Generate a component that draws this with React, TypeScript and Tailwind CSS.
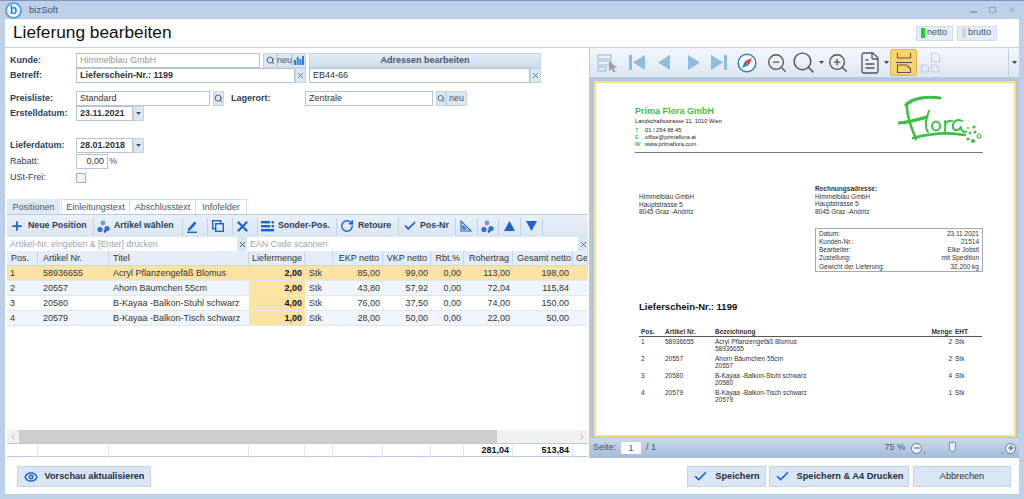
import { Check, ChevronLeft, ChevronRight, Eye, FileText, Minus, Plus, RotateCw, Search, X, ZoomIn, ZoomOut } from "lucide-react";

const positions = [
  { pos: "1", nr: "58936655", title: "Acryl Pflanzengefäß Blomus", qty: "2,00", ekp: "85,00", vkp: "99,00", rbt: "0,00", roh: "113,00", total: "198,00", bg: "bg-[#fce3a3]" },
  { pos: "2", nr: "20557", title: "Ahorn Bäumchen 55cm", qty: "2,00", ekp: "43,80", vkp: "57,92", rbt: "0,00", roh: "72,04", total: "115,84", bg: "bg-[#f0f5fb]" },
  { pos: "3", nr: "20580", title: "B-Kayaa -Balkon-Stuhl schwarz", qty: "4,00", ekp: "76,00", vkp: "37,50", rbt: "0,00", roh: "74,00", total: "150,00", bg: "bg-white" },
  { pos: "4", nr: "20579", title: "B-Kayaa -Balkon-Tisch schwarz", qty: "1,00", ekp: "28,00", vkp: "50,00", rbt: "0,00", roh: "22,00", total: "50,00", bg: "bg-[#f0f5fb]" },
];

const docRows = [
  { pos: "1", nr: "58936655", title: "Acryl Pflanzengefäß Blomus", menge: "2" },
  { pos: "2", nr: "20557", title: "Ahorn Bäumchen 55cm", menge: "2" },
  { pos: "3", nr: "20580", title: "B-Kayaa -Balkon-Stuhl schwarz", menge: "4" },
  { pos: "4", nr: "20579", title: "B-Kayaa -Balkon-Tisch schwarz", menge: "1" },
];

const cols = "grid grid-cols-[31px_71px_140px_56px_28px_50px_48px_33px_49px_60px_15px]";

function Label({ children, bold = true, className = "" }: { children: string; bold?: boolean; className?: string }) {
  return <span className={`w-[66px] shrink-0 text-[9px] leading-[15px] text-[#2c3e57] ${bold ? "font-bold" : ""} ${className}`}>{children}</span>;
}

function Field({ children, className = "" }: { children?: React.ReactNode; className?: string }) {
  return <div className={`h-[15px] border border-[#b4c4d6] bg-white px-[3px] text-[9px] leading-[13px] text-[#333] whitespace-nowrap overflow-hidden ${className}`}>{children}</div>;
}

function SideBtn({ children, className = "" }: { children?: React.ReactNode; className?: string }) {
  return <div className={`h-[15px] flex items-center justify-center border border-[#c5d4e5] bg-[#dbe6f3] text-[9px] text-[#44556b] ${className}`}>{children}</div>;
}

function DateField({ value }: { value: string }) {
  return (
    <div className="flex">
      <Field className="w-[57px] font-bold text-[#111]">{value}</Field>
      <SideBtn className="w-[11px]">
        <svg width="5" height="3" viewBox="0 0 5 3"><path d="M0 0h5L2.5 3z" fill="#44556b" /></svg>
      </SideBtn>
    </div>
  );
}

function Sep() {
  return <span className="w-px h-[17px] bg-[#c3d3e6] shrink-0" />;
}

function ArticleIcon() {
  return (
    <svg width="13" height="13" viewBox="0 0 13 13" fill="#2f6fd6" className="shrink-0">
      <circle cx="6" cy="3" r="2.4" fill="#7d97bb" />
      <circle cx="3" cy="9.5" r="2.6" />
      <circle cx="10" cy="8.5" r="2.6" />
      <circle cx="8" cy="11.5" r="1.2" fill="#1b4fa8" />
    </svg>
  );
}

function TableToolbar() {
  return (
    <div className="h-[22px] flex items-center bg-gradient-to-b from-[#e9f0f9] to-[#d9e5f3] text-[8.8px] font-bold text-[#2c3e57] whitespace-nowrap">
      <Plus size={14} strokeWidth={3} className="ml-[3px] text-[#1d63cc] shrink-0" />
      <span className="ml-[4px] w-[65px]">Neue Position</span>
      <Sep />
      <span className="ml-[3px]"><ArticleIcon /></span>
      <span className="ml-[4px] w-[68px]">Artikel wählen</span>
      <Sep />
      <svg width="11" height="13" viewBox="0 0 11 13" className="ml-[4px] mr-[9px] shrink-0">
        <path d="M1 9l6.5-7.5 2 1.7L3 10.5 .8 11z" fill="#1d63cc" />
        <rect x="0" y="11.6" width="10" height="1.4" fill="#1d63cc" />
      </svg>
      <Sep />
      <svg width="12" height="12" viewBox="0 0 12 12" className="ml-[4px] mr-[8px] shrink-0" fill="none" stroke="#1d63cc" strokeWidth="1.4">
        <rect x=".7" y=".7" width="8" height="8" />
        <rect x="3.7" y="3.7" width="7.6" height="7.6" fill="#e3ecf7" />
      </svg>
      <Sep />
      <svg width="11" height="11" viewBox="0 0 11 11" className="ml-[4px] mr-[9px] shrink-0" stroke="#1d63cc" strokeWidth="2.2"><path d="M.8.8l9.4 9.4M10.2.8L.8 10.2" /></svg>
      <Sep />
      <svg width="13" height="11" viewBox="0 0 13 11" className="ml-[3px] shrink-0" fill="#1d63cc">
        <rect x="0" y="0" width="9" height="2.4" />
        <rect x="0" y="4" width="9" height="2.4" />
        <rect x="0" y="8" width="13" height="2.4" />
        <rect x="10.5" y="0" width="2.4" height="2.4" />
        <rect x="10.5" y="4" width="2.4" height="2.4" />
      </svg>
      <span className="ml-[4px] w-[58px]">Sonder-Pos.</span>
      <Sep />
      <RotateCw size={14} strokeWidth={2.5} className="ml-[3px] text-[#1d63cc] shrink-0" />
      <span className="ml-[4px] w-[40px]">Retoure</span>
      <Sep />
      <Check size={14} strokeWidth={3} className="ml-[4px] text-[#1d63cc] shrink-0" />
      <span className="ml-[3px] w-[35px]">Pos-Nr</span>
      <Sep />
      <svg width="12" height="12" viewBox="0 0 12 12" className="ml-[4px] mr-[5px] shrink-0" fill="none" stroke="#1d63cc" strokeWidth="1.1">
        <path d="M1 1v10h10z" />
        <path d="M3 6v3h3z" />
      </svg>
      <Sep />
      <span className="ml-[3px] mr-[4px]"><ArticleIcon /></span>
      <Sep />
      <svg width="11" height="10" viewBox="0 0 11 10" className="mx-[5px] shrink-0"><path d="M5.5 0L11 10H0z" fill="#1d63cc" /></svg>
      <Sep />
      <svg width="11" height="10" viewBox="0 0 11 10" className="mx-[5px] shrink-0"><path d="M0 0h11L5.5 10z" fill="#1d63cc" /></svg>
      <Sep />
    </div>
  );
}

function PositionsTable() {
  const headers = ["Pos.", "Artikel Nr.", "Titel", "Liefermenge", "", "EKP netto", "VKP netto", "Rbt.%", "Rohertrag", "Gesamt netto", "Ge"];
  const headerPad = ["px-[4px]", "px-[5px]", "px-[4px]", "px-[3px]", "px-[3px]", "px-[3px]", "px-[3px]", "px-[3px]", "px-[3px]", "px-[4px]", "px-[3px]"];
  return (
    <div className="flex-1 flex flex-col min-h-0 border-t border-[#b9cbe0] text-[9px] text-[#333]">
      <TableToolbar />
      <div className="flex h-[14px] bg-white">
        <div className="w-[230px] px-[3px] text-[8.8px] leading-[14px] text-[#9aa5b1] whitespace-nowrap">Artikel-Nr. eingeben &amp; [Enter] drücken</div>
        <div className="w-[10px] flex items-center justify-center bg-[#dbe6f3]"><X size={9} strokeWidth={2.5} className="text-[#44556b]" /></div>
        <div className="w-[329px] ml-[2px] px-[1px] text-[8.8px] leading-[14px] text-[#9aa5b1]">EAN Code scannen</div>
        <div className="w-[10px] flex items-center justify-center bg-[#dbe6f3]"><X size={9} strokeWidth={2} className="text-[#44556b]" /></div>
      </div>
      <div className={`${cols} h-[15px] leading-[15px] bg-[#e3ecf7] border-b border-[#c9d8e8]`}>
        {headers.map((h, i) => (
          <div key={i} className={`${headerPad[i]} border-r border-[#c9d8e8] whitespace-nowrap overflow-hidden ${i >= 5 && i < 10 ? "text-right" : ""}`}>{h}</div>
        ))}
      </div>
      {positions.map((p) => (
        <div key={p.pos} className={`${cols} h-[15px] leading-[14px] border-b border-[#dfe7f0] ${p.bg}`}>
          <div className="px-[3px]">{p.pos}</div>
          <div className="px-[5px]">{p.nr}</div>
          <div className="px-[4px] whitespace-nowrap">{p.title}</div>
          <div className="px-[3px] text-right font-bold text-[#111] bg-[#fce3a3]">{p.qty}</div>
          <div className="px-[4px]">Stk</div>
          <div className="px-[3px] text-right">{p.ekp}</div>
          <div className="px-[3px] text-right">{p.vkp}</div>
          <div className="px-[3px] text-right">{p.rbt}</div>
          <div className="px-[3px] text-right">{p.roh}</div>
          <div className="px-[4px] text-right">{p.total}</div>
          <div />
        </div>
      ))}
      <div className="flex-1" />
      <div className="h-[13px] flex items-center bg-[#f0f0f0]">
        <div className="w-[12px] flex justify-center"><ChevronLeft size={8} className="text-[#999]" /></div>
        <div className="w-[478px] h-full bg-[#cdcdcd]" />
        <div className="flex-1" />
        <div className="w-[12px] flex justify-center"><ChevronRight size={8} className="text-[#999]" /></div>
      </div>
      <div className={`${cols} h-[14px] leading-[13px] border-y border-[#b9cbe0] bg-white`}>
        {headers.map((_, i) => (
          <div key={i} className={`px-[3px] text-right font-bold text-[#111] ${i < 10 ? "border-r border-[#e1e8f0]" : ""}`}>
            {i === 8 ? "281,04" : i === 9 ? "513,84" : ""}
          </div>
        ))}
      </div>
    </div>
  );
}

function PreviewToolbar() {
  const light = "#8fbcdc";
  return (
    <div className="h-[30px] shrink-0 flex items-center bg-gradient-to-b from-[#f3f7fc] to-[#dbe6f2] border-b border-[#b9cbe0]">
      <svg width="21" height="18" viewBox="0 0 21 18" className="ml-[7px] shrink-0" fill="none" stroke="#a9bed4" strokeWidth="1.2">
        <rect x="1" y="1" width="13" height="4" />
        <rect x="1" y="7" width="13" height="4" />
        <rect x="1" y="13" width="8" height="4" />
        <path d="M12 7l0 10 2.5-2 2 3.5 2-1-2-3.5 3.5-.5z" fill="#9a9ea6" stroke="none" />
      </svg>
      <svg width="16" height="15" viewBox="0 0 16 15" className="ml-[11px] shrink-0" fill={light}><rect width="3" height="15" /><path d="M16 0v15L4 7.5z" /></svg>
      <svg width="12" height="15" viewBox="0 0 12 15" className="ml-[13px] shrink-0" fill={light}><path d="M12 0v15L0 7.5z" /></svg>
      <svg width="12" height="15" viewBox="0 0 12 15" className="ml-[18px] shrink-0" fill={light}><path d="M0 0v15L12 7.5z" /></svg>
      <svg width="16" height="15" viewBox="0 0 16 15" className="ml-[11px] shrink-0" fill={light}><path d="M0 0v15L12 7.5z" /><rect x="13" width="3" height="15" /></svg>
      <svg width="20" height="20" viewBox="0 0 20 20" className="ml-[10px] shrink-0">
        <circle cx="10" cy="10" r="8.8" fill="white" stroke="#2f86c6" strokeWidth="1.6" />
        <path d="M15 5l-7 3 4 4z" fill="#e0413a" />
        <path d="M5 15l3-7 4 4z" fill="#2f86c6" />
      </svg>
      <ZoomOut size={22} strokeWidth={1.5} className="ml-[9px] text-[#555] shrink-0" />
      <Search size={25} strokeWidth={1.4} className="ml-[3px] text-[#555] shrink-0" />
      <svg width="5" height="3" viewBox="0 0 5 3" className="ml-[3px] shrink-0"><path d="M0 0h5L2.5 3z" fill="#444" /></svg>
      <ZoomIn size={22} strokeWidth={1.5} className="ml-[3px] text-[#555] shrink-0" />
      <FileText size={24} strokeWidth={1.3} className="ml-[9px] text-[#555] shrink-0" />
      <svg width="5" height="3" viewBox="0 0 5 3" className="ml-[2px] shrink-0"><path d="M0 0h5L2.5 3z" fill="#444" /></svg>
      <div className="ml-[1px] w-[27px] h-[27px] shrink-0 flex items-center justify-center rounded-[2px] border border-[#d9b64e] bg-[#fbd36c]">
        <svg width="16" height="20" viewBox="0 0 16 20" fill="none" stroke="#555" strokeWidth="1.1">
          <path d="M1.5 0v5h13V0" />
          <path d="M0 9.5h16" />
          <path d="M1.5 19.5V12h9l4 3.5v4z" />
        </svg>
      </div>
      <svg width="19" height="21" viewBox="0 0 19 21" className="ml-[4px] shrink-0" fill="none" stroke="#c4ccd6" strokeWidth="1">
        <path d="M10.5 1h5l3 3v6h-8z" />
        <path d="M.5 13h5l2 2v5H.5z" />
        <path d="M10.5 13h5l2 2v5h-7z" />
      </svg>
      <div className="ml-auto h-[28px] w-[11px] border-l border-[#c6d3e2] flex items-center justify-center">
        <svg width="5" height="3" viewBox="0 0 5 3"><path d="M0 0h5L2.5 3z" fill="#444" /></svg>
      </div>
    </div>
  );
}

function FloraLogo() {
  return (
    <svg width="85" height="52" viewBox="0 0 85 52" fill="none" stroke="#3dbf45" strokeLinecap="round" strokeLinejoin="round">
      <path d="M8 10C14 3 30 1 42 3" strokeWidth="3.2" />
      <path d="M9 8C8 18 12 30 18 44" strokeWidth="2.6" />
      <path d="M1 28C12 27 22 24 29 22" strokeWidth="3.2" />
      <path d="M31 16C27 24 27 33 30 37" strokeWidth="2" />
      <ellipse cx="38" cy="31" rx="4" ry="4.5" strokeWidth="2" />
      <path d="M47 26c1 4 0 7 0 10M47 29c2-3 4-4 7-3" strokeWidth="2" />
      <path d="M64 26c-5-3-10 1-9 7 1 3 6 3 8-1 0 3 1 5 5 5" strokeWidth="2" />
      <path d="M15 43C30 39 50 37 67 40" strokeWidth="2.6" />
      <g fill="#3dbf45" stroke="none">
        <circle cx="70" cy="33" r="1" />
        <circle cx="76" cy="32" r="1.6" />
        <circle cx="72" cy="38" r="1.3" />
        <circle cx="77" cy="37" r="1.5" />
        <circle cx="70" cy="44" r="1.6" />
        <circle cx="75" cy="46" r="2" />
      </g>
      <circle cx="81" cy="41" r="2" strokeWidth="1.1" />
    </svg>
  );
}

function DocumentPage() {
  const info = [
    ["Datum:", "23.11.2021"],
    ["Kunden-Nr.:", "21514"],
    ["Bearbeiter:", "Elke Jobstl"],
    ["Zustellung:", "mit Spedition"],
    ["Gewicht der Lieferung:", "32,200 kg"],
  ];
  return (
    <div className="h-full bg-white border-[2px] border-[#fbde82] font-['Liberation_Sans',sans-serif] text-[#333] text-[6.5px] leading-[7.6px] pl-[39px] pr-[31px]">
      {/* Briefkopf */}
      <div className="flex justify-between h-[70px] border-b border-[#777]">
        <div className="pt-[23px]">
          <div className="text-[9px] leading-[10px] font-bold text-[#3dbf45]">Prima Flora GmbH</div>
          <div className="mt-[2px] text-[5.7px] text-[#222]">Landschaftsstrasse 11, 1010 Wien</div>
          <div className="mt-[1px] text-[5.7px] text-[#222]">
            {[["T", "01 / 254 88 45"], ["E", "office@primaflora.at"], ["W", "www.primaflora.com"]].map(([k, v]) => (
              <div key={k} className="flex h-[7px] leading-[7px]">
                <span className="w-[10px] text-[#3dbf45] font-bold">{k}</span>
                <span>{v}</span>
              </div>
            ))}
          </div>
        </div>
        <div className="pt-[12px]"><FloraLogo /></div>
      </div>
      {/* Adressen */}
      <div className="flex mt-[32px] ml-[4px]">
        <div className="w-[176px] pt-[8px]">
          <div>Himmelblau GmbH</div>
          <div>Hauptstrasse 5</div>
          <div>8045 Graz -Andritz</div>
        </div>
        <div>
          <div className="font-bold">Rechnungsadresse:</div>
          <div>Himmelblau GmbH</div>
          <div>Hauptstrasse 5</div>
          <div>8045 Graz -Andritz</div>
        </div>
      </div>
      <div className="ml-[180px] mt-[12px] h-[44px] w-[168px] border border-[#aaa] px-[3px] py-[1px]">
        {info.map(([k, v]) => (
          <div key={k} className="flex justify-between h-[8.2px] leading-[8.2px]"><span>{k}</span><span>{v}</span></div>
        ))}
      </div>
      <div className="mt-[29px] ml-[4px] text-[9.5px] leading-[11px] font-bold text-[#111]">Lieferschein-Nr.: 1199</div>
      {/* Positionen */}
      <div className="mt-[16px] ml-[4px] w-[343px]">
        <div className="flex h-[9px] leading-[8px] font-bold border-b border-[#555] pl-[2px]">
          <span className="w-[24px]">Pos.</span>
          <span className="w-[50px]">Artikel Nr.</span>
          <span className="w-[213px]">Bezeichnung</span>
          <span className="w-[24px] text-right">Menge</span>
          <span className="ml-[3px]">EHT</span>
        </div>
        {docRows.map((r) => (
          <div key={r.pos} className="flex h-[17px] pt-[1px] pl-[2px]">
            <span className="w-[24px]">{r.pos}</span>
            <span className="w-[50px]">{r.nr}</span>
            <div className="w-[213px]">
              <div>{r.title}</div>
              <div>{r.nr}</div>
            </div>
            <span className="w-[24px] text-right">{r.menge}</span>
            <span className="ml-[3px]">Stk</span>
          </div>
        ))}
      </div>
    </div>
  );
}

function StatusBar() {
  return (
    <div className="h-[20px] shrink-0 flex items-center bg-gradient-to-b from-[#cbdaec] to-[#a3bbd6] text-[9px] text-[#44556b]">
      <span className="ml-[3px]">Seite:</span>
      <div className="ml-[5px] w-[20px] h-[12px] bg-white text-center leading-[12px]">1</div>
      <span className="ml-[5px]">/ 1</span>
      <span className="ml-auto">75 %</span>
      <div className="ml-[6px] w-[11px] h-[11px] rounded-full border border-[#667a93] bg-[#e9f0f8] flex items-center justify-center"><Minus size={8} strokeWidth={3} /></div>
      <div className="relative w-[83px] h-[14px]">
        <span className="absolute left-[2px] top-[11px] w-px h-[2px] bg-[#667a93]" />
        <span className="absolute left-[80px] top-[11px] w-px h-[2px] bg-[#667a93]" />
        <div className="absolute left-[27px] top-[1px] w-[7px] h-[10px] bg-[#e3ebf5] border border-[#7a8ea8] rounded-b-[3px]" />
      </div>
      <div className="mr-[3px] w-[11px] h-[11px] rounded-full border border-[#667a93] bg-[#e9f0f8] flex items-center justify-center"><Plus size={8} strokeWidth={3} /></div>
    </div>
  );
}

function ActionButton({ children, className = "" }: { children: React.ReactNode; className?: string }) {
  return <div className={`h-[21px] flex items-center justify-center whitespace-nowrap border border-[#c3d2e4] bg-[#dbe6f5] text-[9.2px] text-[#1f2d40] ${className}`}>{children}</div>;
}

export default function App() {
  return (
    <div className="w-[1024px] h-[499px] overflow-hidden flex flex-col bg-[#bdd0e8] border-t border-[#7d97ba] font-['Liberation_Sans',sans-serif]">
      {/* Titelleiste */}
      <div className="h-[18px] shrink-0 flex items-center">
        <div className="ml-[5px] w-[17px] h-[17px] rounded-full bg-white border-[2px] border-[#5aa2e0] flex items-center justify-center text-[12px] leading-none font-bold text-[#2a83d8]">b</div>
        <span className="ml-[7px] text-[9.5px] text-[#44556b]">bizSoft</span>
        <div className="ml-auto mr-[8px] flex items-center gap-[12px] text-[#8fa3bd]">
          <span className="w-[7px] h-[2px] bg-[#8fa3bd] mt-[4px]" />
          <span className="w-[7px] h-[6px] border border-[#8fa3bd]" />
          <X size={8} strokeWidth={2.5} />
        </div>
      </div>

      <div className="mx-[5px] h-[475px] bg-white flex flex-col">
        {/* Kopf */}
        <div className="h-[29px] shrink-0 flex items-center border-b border-[#c3d2e4] pl-[8px] pr-[22px]">
          <h1 className="text-[17.3px] leading-none text-[#111]">Lieferung bearbeiten</h1>
          <div className="ml-auto flex gap-[4px] text-[9px] text-[#44556b]">
            <div className="w-[37px] h-[15px] flex items-center bg-[#e3ecf7] border border-[#cfdcea]">
              <span className="ml-[4px] mr-[2px] w-[4px] h-[10px] bg-[#22cc33]" />netto
            </div>
            <div className="w-[40px] h-[15px] flex items-center bg-[#e3ecf7] border border-[#cfdcea]">
              <span className="ml-[4px] mr-[2px] w-[4px] h-[10px] bg-[#c9d6e6]" />brutto
            </div>
          </div>
        </div>

        <div className="flex h-[410px] shrink-0">
          {/* Formular + Tabelle */}
          <div className="w-[584px] shrink-0 flex flex-col pl-[2px] pr-[1px] pb-[1px]">
            <div className="pl-[3px] pt-[5px]">
              <div className="flex">
                <Label>Kunde:</Label>
                <Field className="w-[184px] text-[#999]">Himmelblau GmbH</Field>
                <SideBtn className="ml-[3px] w-[14px]"><Search size={9} strokeWidth={2.5} /></SideBtn>
                <SideBtn className="w-[15px]">neu</SideBtn>
                <SideBtn className="w-[14px]">
                  <svg width="10" height="9" viewBox="0 0 10 9" fill="#2f7be0"><rect y="4" width="2" height="5" /><rect x="2.7" y="1" width="2" height="8" /><rect x="5.4" y="3" width="2" height="6" /><rect x="8" width="2" height="9" /></svg>
                </SideBtn>
                <SideBtn className="ml-[3px] w-[232px] font-bold bg-gradient-to-b from-[#e3ecf7] to-[#cfdcee]">Adressen bearbeiten</SideBtn>
              </div>
              <div className="flex">
                <Label>Betreff:</Label>
                <Field className="w-[219px] font-bold text-[#111]">Lieferschein-Nr.: 1199</Field>
                <SideBtn className="w-[11px]"><X size={9} strokeWidth={2} /></SideBtn>
                <Field className="ml-[3px] w-[221px]">EB44-66</Field>
                <SideBtn className="w-[11px]"><X size={9} strokeWidth={2} /></SideBtn>
              </div>
              <div className="flex mt-[8px]">
                <Label>Preisliste:</Label>
                <Field className="w-[134px]">Standard</Field>
                <SideBtn className="ml-[3px] w-[11px]"><Search size={9} strokeWidth={2.5} /></SideBtn>
                <Label className="ml-[7px] w-[74px]">Lagerort:</Label>
                <Field className="w-[128px]">Zentrale</Field>
                <SideBtn className="ml-[3px] w-[10px]"><Search size={9} strokeWidth={2.5} /></SideBtn>
                <SideBtn className="w-[21px]">neu</SideBtn>
              </div>
              <div className="flex">
                <Label>Erstelldatum:</Label>
                <DateField value="23.11.2021" />
              </div>
              <div className="flex mt-[17px]">
                <Label>Lieferdatum:</Label>
                <DateField value="28.01.2018" />
              </div>
              <div className="flex mt-[1px]">
                <Label bold={false}>Rabatt:</Label>
                <Field className="w-[32px] text-right">0,00</Field>
                <span className="ml-[1px] text-[9px] leading-[15px] text-[#44556b]">%</span>
              </div>
              <div className="flex mt-[1px] items-center h-[15px]">
                <Label bold={false}>USt-Frei:</Label>
                <div className="w-[10px] h-[10px] border border-[#9fb1c6] bg-[#eef3f9]" />
              </div>
            </div>

            <div className="mt-[14px] flex text-[9px] leading-[15px] text-[#44556b] h-[15px] shrink-0">
              <div className="w-[53px] text-center bg-[#dfe9f5] border border-b-0 border-[#dfe9f5]">Positionen</div>
              <div className="ml-[1px] w-[69px] text-center border border-b-0 border-[#d3deeb]">Einleitungstext</div>
              <div className="w-[66px] text-center border border-b-0 border-l-0 border-[#d3deeb]">Abschlusstext</div>
              <div className="w-[51px] text-center border border-b-0 border-l-0 border-[#d3deeb]">Infofelder</div>
            </div>
            <PositionsTable />
          </div>

          {/* Vorschau */}
          <div className="w-[430px] shrink-0 flex flex-col border-l border-[#b9cbe0]">
            <PreviewToolbar />
            <div className="flex-1 min-h-0 bg-[#b4c6da] pt-[3px] pr-[3px] pl-[4px] pb-[1px]">
              <DocumentPage />
            </div>
            <StatusBar />
          </div>
        </div>

        {/* Aktionen */}
        <div className="flex-1 flex items-start pt-[8px] pl-[12px] pr-[8px]">
          <ActionButton className="w-[134px] font-bold">
            <Eye size={14} strokeWidth={2.6} className="mr-[7px] text-[#1d63cc]" />
            Vorschau aktualisieren
          </ActionButton>
          <ActionButton className="ml-auto w-[79px] font-bold">
            <Check size={15} strokeWidth={2.6} className="mr-[7px] text-[#1d63cc]" />
            Speichern
          </ActionButton>
          <ActionButton className="ml-[3px] w-[140px] font-bold">
            <Check size={15} strokeWidth={2.6} className="mr-[7px] text-[#1d63cc]" />
            Speichern &amp; A4 Drucken
          </ActionButton>
          <ActionButton className="ml-[4px] w-[98px]">Abbrechen</ActionButton>
        </div>
      </div>
    </div>
  );
}
